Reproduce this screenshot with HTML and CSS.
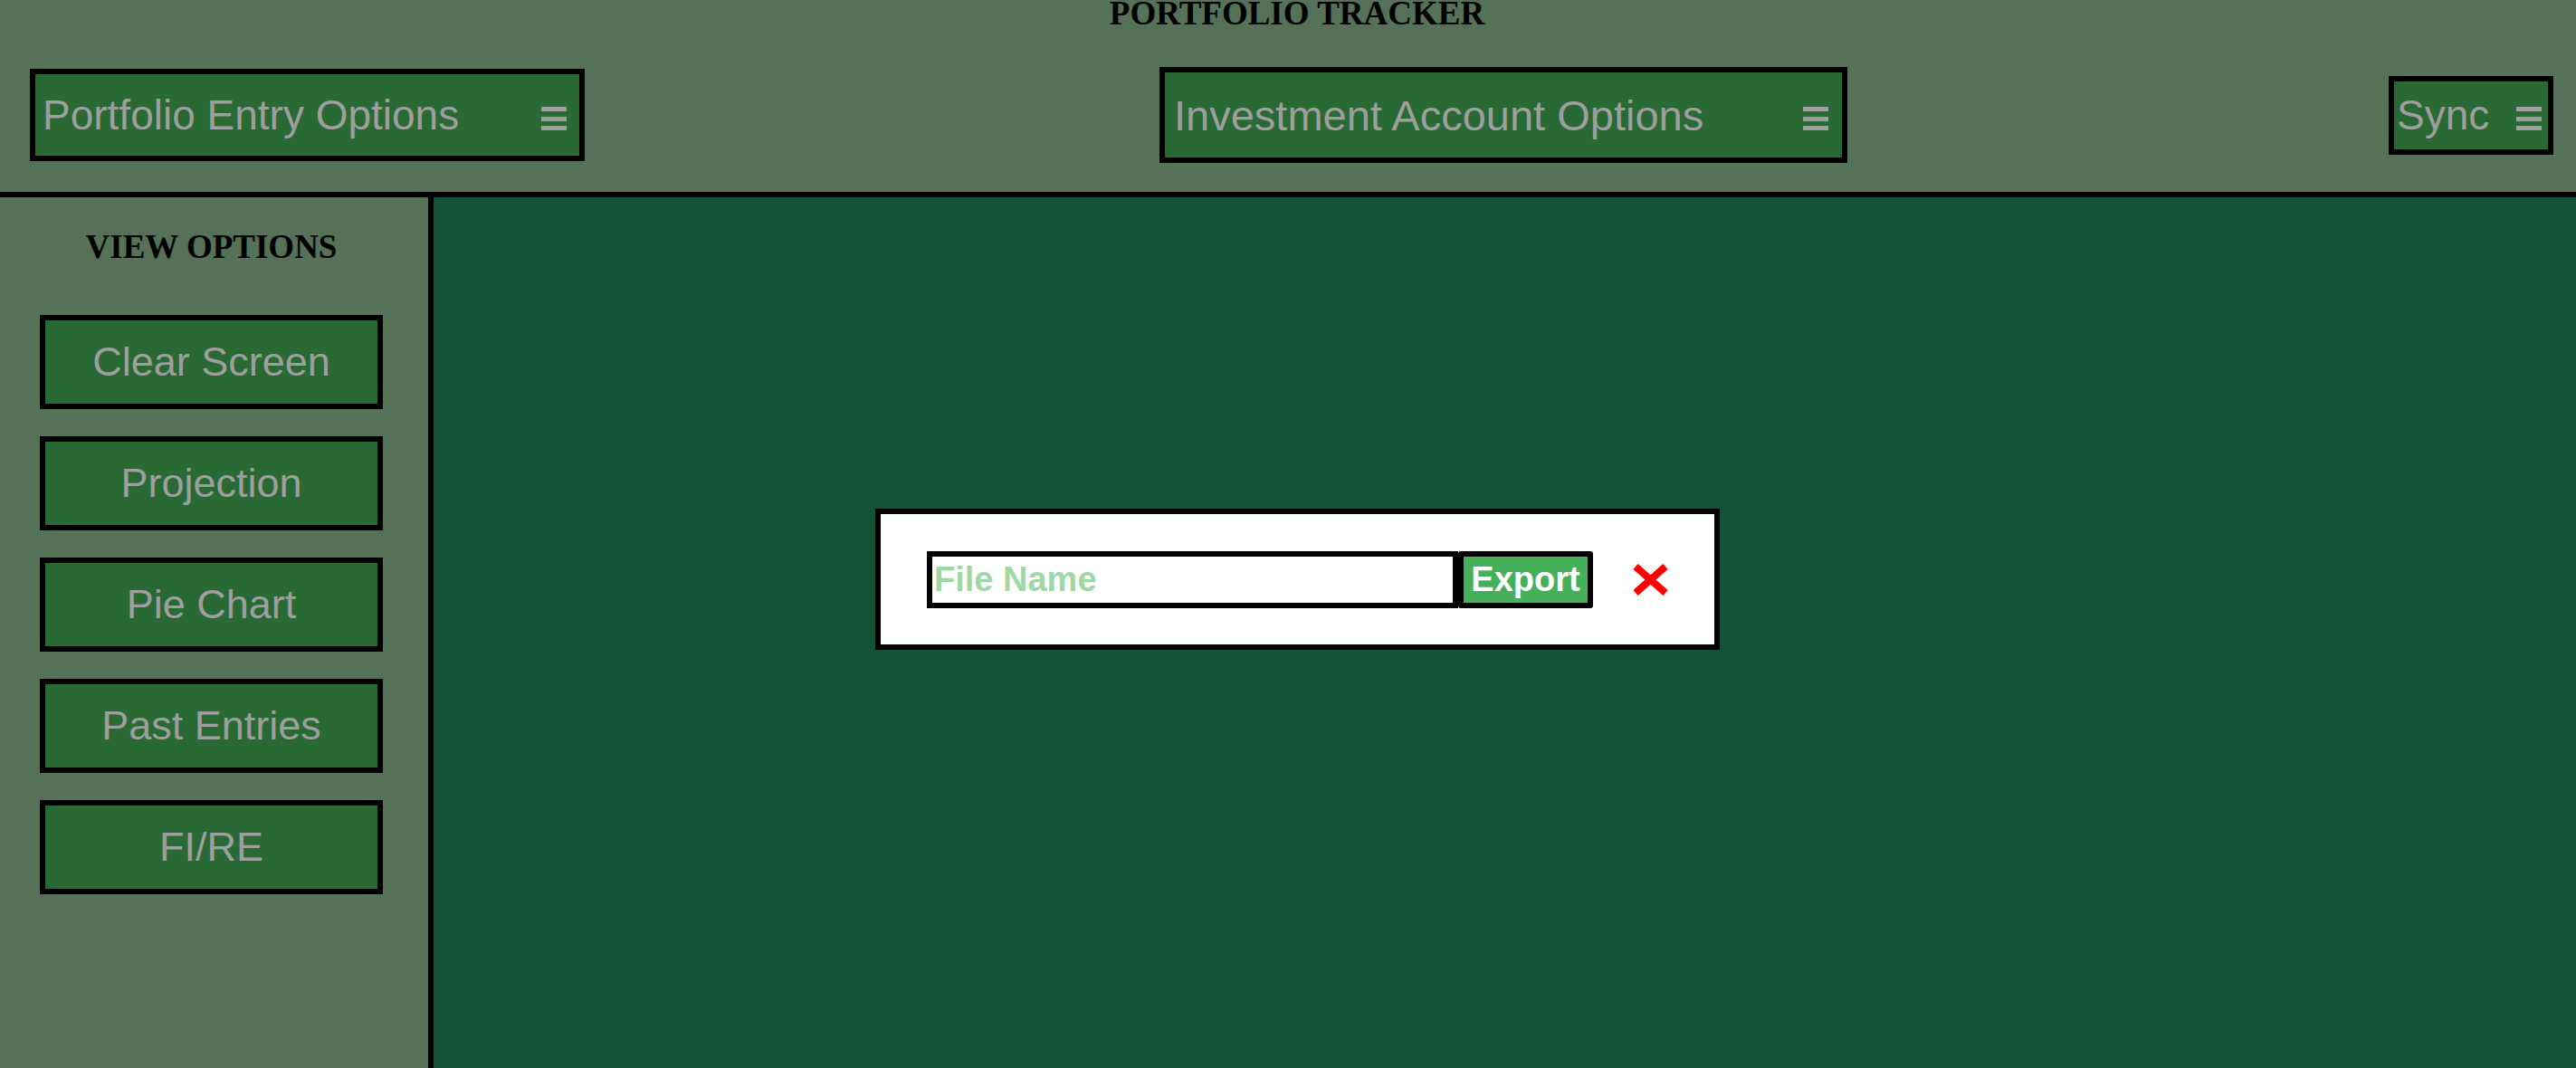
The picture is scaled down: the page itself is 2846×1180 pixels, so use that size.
FILE: index.html
```html
<!DOCTYPE html>
<html lang="en">
<head>
<meta charset="utf-8">
<title>Portfolio Tracker</title>
<link rel="stylesheet" href="styles.css">
</head>
<body>
<header class="top">
  <h1 class="title">PORTFOLIO TRACKER</h1>
  <div class="menu-row">
    <button class="menu-btn menu-entry">
      <span class="menu-label">Portfolio Entry Options</span>
      <svg class="burger" width="28" height="26" viewBox="0 0 28 26"><rect x="0" y="0" width="28" height="5"/><rect x="0" y="11" width="28" height="5"/><rect x="0" y="21" width="28" height="5"/></svg>
    </button>
    <button class="menu-btn menu-account">
      <span class="menu-label">Investment Account Options</span>
      <svg class="burger" width="28" height="26" viewBox="0 0 28 26"><rect x="0" y="0" width="28" height="5"/><rect x="0" y="11" width="28" height="5"/><rect x="0" y="21" width="28" height="5"/></svg>
    </button>
    <button class="menu-btn menu-sync">
      <span class="menu-label">Sync</span>
      <svg class="burger" width="28" height="26" viewBox="0 0 28 26"><rect x="0" y="0" width="28" height="5"/><rect x="0" y="11" width="28" height="5"/><rect x="0" y="21" width="28" height="5"/></svg>
    </button>
  </div>
</header>
<div class="body-row">
  <aside class="sidebar">
    <h2 class="side-title">VIEW OPTIONS</h2>
    <div class="side-list">
      <button class="side-btn">Clear Screen</button>
      <button class="side-btn">Projection</button>
      <button class="side-btn">Pie Chart</button>
      <button class="side-btn">Past Entries</button>
      <button class="side-btn">FI/RE</button>
    </div>
  </aside>
  <main class="canvas"></main>
</div>
<div class="modal">
  <input class="file-input" type="text" placeholder="File Name">
  <button class="export-btn">Export</button>
  <svg class="close-x" width="39" height="35" viewBox="0 0 39 35"><line x1="3" y1="3" x2="36" y2="32"/><line x1="36" y1="3" x2="3" y2="32"/></svg>
</div>
</body>
</html>
```

FILE: styles.css
```css
html, body {
  margin: 0;
  padding: 0;
}
body {
  width: 2846px;
  height: 1180px;
  overflow: hidden;
  background: #557258;
  position: relative;
  display: flex;
  flex-direction: column;
}
.top {
  height: 212px;
  border-bottom: 6px solid #000;
  background: #557258;
  flex: none;
}
.title {
  margin: 0;
  padding-left: 20px;
  font-family: "Liberation Serif", "Times New Roman", serif;
  font-weight: bold;
  font-size: 37px;
  line-height: 30px;
  text-align: center;
  color: #000;
}
.menu-row {
  display: flex;
  align-items: center;
  padding: 12px 0 0 33px;
  height: 170px;
}
.menu-btn {
  box-sizing: border-box;
  display: flex;
  align-items: center;
  justify-content: space-between;
  border: 6px solid #000;
  background: #296a34;
  color: #9e9e9e;
  font-family: "Liberation Sans", Arial, sans-serif;
  font-size: 46px;
  margin: 0;
  cursor: pointer;
}
.menu-label {
  white-space: nowrap;
}
.burger {
  fill: #9e9e9e;
  flex: none;
  margin-top: 8px;
}
.menu-entry {
  width: 613px;
  height: 102px;
  padding: 0 14px 0 8px;
}
.menu-account {
  width: 760px;
  height: 106px;
  padding: 0 15px 0 10px;
  margin-left: 635px;
  font-size: 47px;
}
.menu-sync {
  width: 182px;
  height: 87px;
  padding: 0 7px 0 3px;
  margin-left: 598px;
}
.body-row {
  flex: 1;
  display: flex;
  min-height: 0;
}
.sidebar {
  width: 473px;
  border-right: 6px solid #000;
  background: #557258;
  flex: none;
}
.side-title {
  margin: 35px 0 0;
  padding-right: 6px;
  font-family: "Liberation Serif", "Times New Roman", serif;
  font-weight: bold;
  font-size: 37px;
  line-height: 40px;
  text-align: center;
  color: #000;
}
.side-list {
  display: flex;
  flex-direction: column;
  gap: 30px;
  margin: 55px 0 0 44px;
}
.side-btn {
  box-sizing: border-box;
  width: 379px;
  height: 104px;
  border: 6px solid #000;
  background: #296a34;
  color: #9e9e9e;
  font-family: "Liberation Sans", Arial, sans-serif;
  font-size: 45px;
  padding: 0;
  margin: 0;
  cursor: pointer;
}
.canvas {
  flex: 1;
  background: #145238;
}
.modal {
  position: absolute;
  left: 967px;
  top: 562px;
  width: 933px;
  height: 156px;
  box-sizing: border-box;
  border: 6px solid #000;
  background: #fff;
  display: flex;
  align-items: center;
  justify-content: center;
}
.file-input {
  box-sizing: border-box;
  width: 587px;
  height: 63px;
  border: 6px solid #000;
  padding: 0 2px;
  margin: 0;
  font-family: "Liberation Sans", Arial, sans-serif;
  font-weight: bold;
  font-size: 38px;
  color: #000;
  background: #fff;
  outline: none;
}
.file-input::placeholder {
  color: #9fd8a6;
  opacity: 1;
}
.export-btn {
  box-sizing: border-box;
  width: 149px;
  height: 63px;
  border: 6px solid #000;
  border-radius: 3px;
  background: #45b05a;
  color: #fff;
  font-family: "Liberation Sans", Arial, sans-serif;
  font-weight: bold;
  font-size: 38px;
  padding: 0;
  margin: 0;
  cursor: pointer;
}
.close-x {
  margin-left: 44px;
  stroke: #ff0000;
  stroke-width: 8;
  stroke-linecap: butt;
  flex: none;
}
```
